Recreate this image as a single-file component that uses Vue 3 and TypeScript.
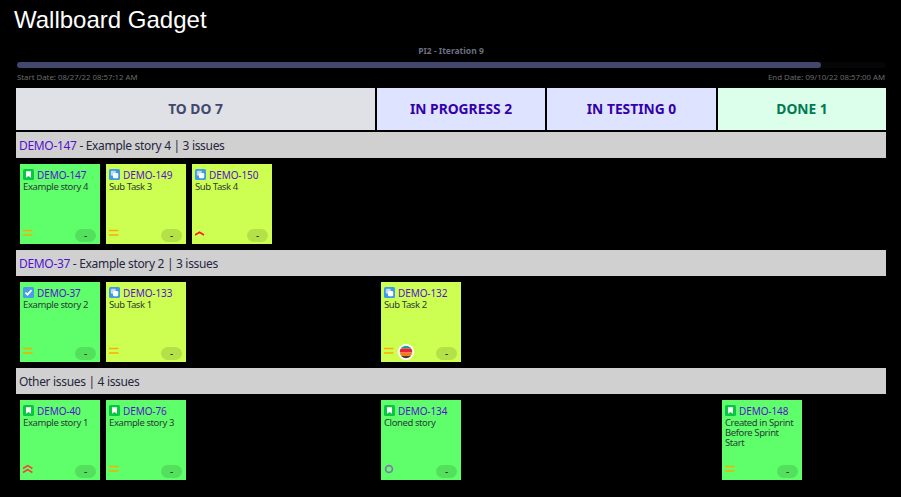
<script setup lang="ts">
type IssueType = 'story' | 'subtask' | 'task'
type Priority = 'medium' | 'high' | 'highest' | 'none'

interface Issue {
  key: string
  summary: string
  type: IssueType
  priority: Priority
  avatar?: boolean
}

interface Lane {
  key?: string
  title: string
  columns: Issue[][]
}

const columns = [
  { name: 'TO DO 7', tone: 'todo' },
  { name: 'IN PROGRESS 2', tone: 'progress' },
  { name: 'IN TESTING 0', tone: 'progress' },
  { name: 'DONE 1', tone: 'done' }
]

const lanes: Lane[] = [
  {
    key: 'DEMO-147',
    title: ' - Example story 4 | 3 issues',
    columns: [
      [
        { key: 'DEMO-147', summary: 'Example story 4', type: 'story', priority: 'medium' },
        { key: 'DEMO-149', summary: 'Sub Task 3', type: 'subtask', priority: 'medium' },
        { key: 'DEMO-150', summary: 'Sub Task 4', type: 'subtask', priority: 'high' }
      ],
      [],
      [],
      []
    ]
  },
  {
    key: 'DEMO-37',
    title: ' - Example story 2 | 3 issues',
    columns: [
      [
        { key: 'DEMO-37', summary: 'Example story 2', type: 'task', priority: 'medium' },
        { key: 'DEMO-133', summary: 'Sub Task 1', type: 'subtask', priority: 'medium' }
      ],
      [{ key: 'DEMO-132', summary: 'Sub Task 2', type: 'subtask', priority: 'medium', avatar: true }],
      [],
      []
    ]
  },
  {
    title: 'Other issues | 4 issues',
    columns: [
      [
        { key: 'DEMO-40', summary: 'Example story 1', type: 'story', priority: 'highest' },
        { key: 'DEMO-76', summary: 'Example story 3', type: 'story', priority: 'medium' }
      ],
      [{ key: 'DEMO-134', summary: 'Cloned story', type: 'story', priority: 'none' }],
      [],
      [{ key: 'DEMO-148', summary: 'Created in Sprint Before Sprint Start', type: 'story', priority: 'medium' }]
    ]
  }
]

const progress = 92.5
</script>

<template>
  <main class="page">
    <h1 class="title">Wallboard Gadget</h1>

    <section class="sprint">
      <div class="sprint-name">PI2 - Iteration 9</div>
      <div class="track">
        <div class="bar" :style="{ width: progress + '%' }"></div>
      </div>
      <div class="dates">
        <span>Start Date: 08/27/22 08:57:12 AM</span>
        <span>End Date: 09/10/22 08:57:00 AM</span>
      </div>
    </section>

    <section class="board">
      <div class="grid heads">
        <div v-for="col in columns" :key="col.name" class="head" :class="`--${col.tone}`">{{ col.name }}</div>
      </div>

      <div v-for="lane in lanes" :key="lane.title" class="lane">
        <div class="lane-title">
          <a v-if="lane.key" class="link">{{ lane.key }}</a>{{ lane.title }}
        </div>
        <div class="grid cells">
          <div v-for="(cell, i) in lane.columns" :key="i" class="cell">
            <article
              v-for="issue in cell"
              :key="issue.key"
              class="card"
              :class="issue.type === 'subtask' ? '--sub' : '--main'"
            >
              <div class="card-top">
                <svg v-if="issue.type === 'story'" class="type" viewBox="0 0 11 11">
                  <rect width="11" height="11" rx="1.5" fill="#0bc645" />
                  <path d="M3 2.2h5v6.600L5.500 7 3 8.800z" fill="#fff" />
                </svg>
                <svg v-else-if="issue.type === 'task'" class="type" viewBox="0 0 11 11">
                  <rect width="11" height="11" rx="1.5" fill="#4a9be8" />
                  <path d="M2.400 5.600l2.100 2.100 4-4.500" fill="none" stroke="#fff" stroke-width="1.800" />
                </svg>
                <svg v-else class="type" viewBox="0 0 11 11">
                  <rect width="11" height="11" rx="1.5" fill="#3f9be8" />
                  <rect x="1.800" y="1.800" width="5" height="5" rx="1.200" fill="#bcdcf7" />
                  <rect x="4" y="4" width="5.200" height="5.200" rx="1.200" fill="#fff" />
                </svg>
                <a class="link">{{ issue.key }}</a>
              </div>
              <div class="summary">{{ issue.summary }}</div>
              <div class="card-foot">
                <svg v-if="issue.priority === 'medium'" class="prio" viewBox="0 0 10 10">
                  <path d="M0 2.500h9.500M0 7h9.500" stroke="#ffab00" stroke-width="1.700" fill="none" />
                </svg>
                <svg v-else-if="issue.priority === 'high'" class="prio" viewBox="0 0 10 10">
                  <path d="M0 7L4.500 4.300 9 7" stroke="#ff1a1a" stroke-width="1.600" fill="none" />
                </svg>
                <svg v-else-if="issue.priority === 'highest'" class="prio" viewBox="0 0 10 10">
                  <path d="M0 4.500L4.700 1.600l4.700 2.900M0 8.500L4.700 5.600l4.700 2.900" stroke="#ff3b3b" stroke-width="1.500" fill="none" />
                </svg>
                <svg v-else class="prio" viewBox="0 0 10 10">
                  <circle cx="5" cy="5" r="3.400" stroke="#8478ad" stroke-width="1.700" fill="none" />
                </svg>
                <svg v-if="issue.avatar" class="avatar" viewBox="0 0 16 16">
                  <circle cx="8" cy="8" r="8" fill="#fff" />
                  <clipPath id="face"><circle cx="8" cy="8" r="6.200" /></clipPath>
                  <g clip-path="url(#face)">
                    <rect y="1" width="16" height="3.500" fill="#1c9c8c" />
                    <rect y="4.500" width="16" height="4" fill="#e8233a" />
                    <rect y="8.500" width="16" height="3.500" fill="#f57a1f" />
                    <rect y="12" width="16" height="3" fill="#4a3a30" />
                  </g>
                </svg>
                <span class="pill">-</span>
              </div>
            </article>
          </div>
        </div>
      </div>
    </section>
  </main>
</template>

<style scoped>
.page {
  box-sizing: border-box;
  height: 497px;
  padding: 6px 15px 0 16px;
  background: #000;
  font-family: 'Noto Sans', sans-serif;
}
.title {
  margin: 0 0 0 -2px;
  font-family: 'Liberation Sans', sans-serif;
  font-size: 24px;
  font-weight: 400;
  line-height: 28px;
  color: #fff;
}

/** sprint progress */
.sprint {
  margin-top: 11px;
}
.sprint-name {
  font-size: 8.500px;
  font-weight: 700;
  line-height: 12px;
  text-align: center;
  color: #6b6f80;
}
.track {
  height: 6px;
  margin: 5px 0 0 1px;
  border-radius: 3px;
  background: #060608;
}
.bar {
  height: 100%;
  border-radius: 3px;
  background: #42476e;
}
.dates {
  display: flex;
  justify-content: space-between;
  margin: 4px 1px 0;
  font-size: 7.800px;
  line-height: 11px;
  color: #6b6b6b;
}

/** board */
.board {
  margin-top: 5px;
}
.grid {
  display: grid;
  grid-template-columns: 359px 168px 169px 168px;
  column-gap: 2px;
}
.head {
  display: flex;
  align-items: center;
  justify-content: center;
  box-sizing: border-box;
  height: 42px;
  padding-bottom: 2px;
  font-size: 13.800px;
  font-weight: 700;
}
.head.--todo {
  background: #dfe1e6;
  color: #42476e;
}
.head.--progress {
  background: #dee4ff;
  color: #3300aa;
}
.head.--done {
  background: #dcffec;
  color: #007a50;
}
.lane {
  margin-top: 2px;
}
.lane + .lane {
  margin-top: 0;
}
.lane-title {
  height: 26px;
  padding-left: 3px;
  background: #d0d0d0;
  font-size: 12px;
  letter-spacing: -0.32px;
  line-height: 28px;
  color: #26263f;
}
.link {
  color: #5510d0;
}
.cell {
  display: flex;
  gap: 6px;
  padding: 6px 4px;
}

/** card */
.card {
  display: flex;
  flex-direction: column;
  box-sizing: border-box;
  width: 80px;
  height: 80px;
  padding: 4px 4px 2px 3px;
  font-size: 9.500px;
  letter-spacing: -0.4px;
  line-height: 10px;
  color: #2c3a3a;
}
.card.--main {
  background: #5eff6a;
}
.card.--sub {
  background: #cdff52;
}
.card-top {
  display: flex;
  align-items: center;
  gap: 3px;
  height: 12px;
}
.card-top .link {
  padding-top: 1px;
  font-size: 10px;
  letter-spacing: -0.1px;
}
.type {
  flex: none;
  width: 11px;
  height: 11px;
}
.summary {
  margin-top: 2px;
}
.card-foot {
  display: flex;
  align-items: flex-end;
  margin-top: auto;
}
.prio {
  flex: none;
  width: 10px;
  height: 10px;
  margin-bottom: 4px;
}
.avatar {
  flex: none;
  width: 16px;
  height: 16px;
  margin-left: 4px;
}
.pill {
  flex: none;
  width: 21px;
  height: 13px;
  margin-left: auto;
  border-radius: 7px;
  background: rgba(0, 0, 0, 0.12);
  font-size: 10px;
  letter-spacing: 0;
  line-height: 13px;
  text-align: center;
  color: #222;
}
</style>

<style>
html,
body {
  background: #000;
  overflow: hidden;
}
</style>
